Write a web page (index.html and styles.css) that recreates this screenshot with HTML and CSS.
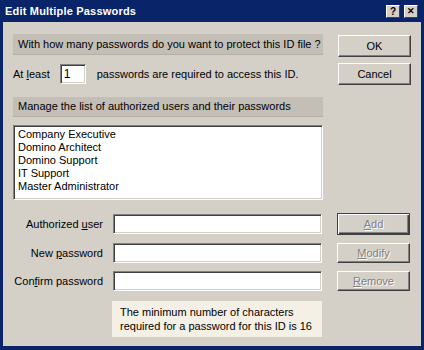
FILE: index.html
```html
<!DOCTYPE html>
<html lang="en">
<head>
    <meta charset="UTF-8">
    <title>Edit Multiple Passwords</title>
    <link rel="stylesheet" href="styles.css">
</head>
<body>
    <div class="window">
        <div class="titlebar">
            <span class="title">Edit Multiple Passwords</span>
            <div class="title-buttons">
                <span class="title-btn">?</span>
                <span class="title-btn close">&#x2715;</span>
            </div>
        </div>

        <div class="dialog">
            <!-- Top part: how many passwords + OK/Cancel -->
            <div class="top-row">
                <div class="left-col">
                    <div class="group-header">With how many passwords do you want to protect this ID file ?</div>
                    <div class="atleast-row">
                        <span>At <u>l</u>east</span>
                        <input type="text" class="field small" value="1">
                        <span>passwords are required to access this ID.</span>
                    </div>
                    <div class="group-header second">Manage the list of authorized users and their passwords</div>
                    <div class="listbox">
                        <div>Company Executive</div>
                        <div>Domino Architect</div>
                        <div>Domino Support</div>
                        <div>IT Support</div>
                        <div>Master Administrator</div>
                    </div>
                </div>
                <div class="right-col">
                    <button class="btn">OK</button>
                    <button class="btn">Cancel</button>
                </div>
            </div>

            <!-- Edit fields -->
            <div class="fields">
                <label class="field-label">Authorized <u>u</u>ser</label>
                <input type="text" class="field">
                <button class="btn disabled default"><u>A</u>dd</button>

                <label class="field-label">New <u>p</u>assword</label>
                <input type="password" class="field">
                <button class="btn disabled"><u>M</u>odify</button>

                <label class="field-label">Con<u>f</u>irm password</label>
                <input type="password" class="field">
                <button class="btn disabled"><u>R</u>emove</button>

                <div class="info">The minimum number of characters<br>required for a password for this ID is 16</div>
            </div>
        </div>
    </div>
</body>
</html>
```

FILE: styles.css
```css
body {
    margin: 0;
    padding: 0;
    font-family: 'Liberation Sans', Arial, sans-serif;
    font-size: 11px;
    color: #000;
}

.window {
    width: 424px;
    height: 350px;
    box-sizing: border-box;
    background-color: #d4d0c8;
    border-style: solid;
    border-color: #0a246a;
    border-width: 0 3px 4px 3px;
    display: flex;
    flex-direction: column;
}

.titlebar {
    height: 22px;
    flex-shrink: 0;
    background-color: #0a246a;
    margin: 0 -3px;
    display: flex;
    align-items: center;
    justify-content: space-between;
    padding: 0 6px 0 5px;
}

.title {
    color: #fff;
    font-weight: bold;
    font-size: 11px;
    letter-spacing: 0.2px;
}

.title-buttons {
    display: flex;
    gap: 4px;
}

.title-btn {
    width: 14px;
    height: 13px;
    box-sizing: border-box;
    background-color: #d4d0c8;
    border: 1px solid;
    border-color: #fff #404040 #404040 #fff;
    font-size: 10px;
    font-weight: bold;
    line-height: 11px;
    text-align: center;
    color: #000;
}

.title-btn.close {
    font-size: 9px;
}

.dialog {
    padding: 12px 0 0 10px;
}

.top-row {
    display: flex;
}

.left-col {
    width: 310px;
}

.right-col {
    margin-left: 15px;
    padding-top: 1px;
    display: flex;
    flex-direction: column;
    gap: 6px;
}

.group-header {
    height: 21px;
    box-sizing: border-box;
    background-color: #c3bfb7;
    border-bottom: 1px solid #b3afa7;
    padding-left: 5px;
    line-height: 20px;
    white-space: nowrap;
}

.group-header.second {
    height: 20px;
    line-height: 19px;
    margin-top: 13px;
}

.atleast-row {
    display: flex;
    align-items: center;
    margin-top: 9px;
    height: 20px;
    white-space: nowrap;
}

.atleast-row .field.small {
    width: 26px;
    margin: 0 11px 0 10px;
}

.field {
    height: 20px;
    box-sizing: border-box;
    background-color: #fff;
    border: 1px solid;
    border-color: #808080 #fff #fff #808080;
    box-shadow: inset 1px 1px 0 #404040, inset -1px -1px 0 #d4d0c8;
    font-family: inherit;
    font-size: 12px;
    padding: 0 3px;
    outline: none;
}

.listbox {
    margin-top: 8px;
    height: 75px;
    box-sizing: border-box;
    background-color: #fff;
    border: 1px solid;
    border-color: #808080 #fff #fff #808080;
    box-shadow: inset 1px 1px 0 #404040, inset -1px -1px 0 #d4d0c8;
    padding: 2px 4px;
    line-height: 13px;
}

.btn {
    width: 73px;
    height: 22px;
    box-sizing: border-box;
    background-color: #d4d0c8;
    border: 1px solid;
    border-color: #fff #404040 #404040 #fff;
    box-shadow: inset -1px -1px 0 #808080, inset 1px 1px 0 #d4d0c8;
    font-family: inherit;
    font-size: 11px;
    color: #000;
    padding: 0;
}

.btn.disabled {
    color: #808080;
    text-shadow: 1px 1px 0 #fff;
}

.btn.default {
    border-color: #404040;
    box-shadow: inset 1px 1px 0 #fff, inset -1px -1px 0 #404040, inset -2px -2px 0 #808080;
}

.fields {
    display: grid;
    grid-template-columns: 90px 209px 73px;
    column-gap: 10px;
    row-gap: 8px;
    margin-top: 13px;
    align-items: center;
}

.fields .btn {
    margin-left: 5px;
}

.field-label {
    text-align: right;
    white-space: nowrap;
}

.fields .btn.disabled:not(.default) {
    height: 20px;
}

.info {
    grid-column: 2;
    margin-top: 2px;
    margin-left: -1px;
    height: 36px;
    box-sizing: border-box;
    background-color: #f5f0e6;
    padding: 4px 8px;
    line-height: 14px;
}
```
